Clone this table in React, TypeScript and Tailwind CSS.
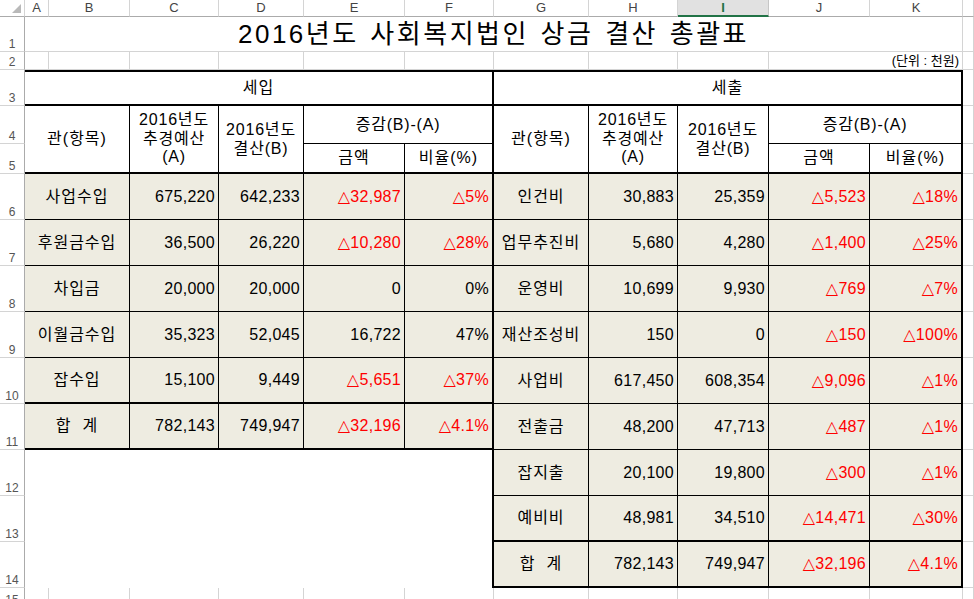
import clsx from "clsx";

// 2016 settlement summary sheet, drawn as an Excel-like grid
const FONT = "font-['Liberation_Sans','DejaVu_Sans','Noto_Sans_CJK_KR',sans-serif]";

const COLS = ["A", "B", "C", "D", "E", "F", "G", "H", "I", "J", "K", "L"];

const INCOME = [
  ["사업수입", "675,220", "642,233", "△32,987", "△5%"],
  ["후원금수입", "36,500", "26,220", "△10,280", "△28%"],
  ["차입금", "20,000", "20,000", "0", "0%"],
  ["이월금수입", "35,323", "52,045", "16,722", "47%"],
  ["잡수입", "15,100", "9,449", "△5,651", "△37%"],
  ["합  계", "782,143", "749,947", "△32,196", "△4.1%"],
];

const SPEND = [
  ["인건비", "30,883", "25,359", "△5,523", "△18%"],
  ["업무추진비", "5,680", "4,280", "△1,400", "△25%"],
  ["운영비", "10,699", "9,930", "△769", "△7%"],
  ["재산조성비", "150", "0", "△150", "△100%"],
  ["사업비", "617,450", "608,354", "△9,096", "△1%"],
  ["전출금", "48,200", "47,713", "△487", "△1%"],
  ["잡지출", "20,100", "19,800", "△300", "△1%"],
  ["예비비", "48,981", "34,510", "△14,471", "△30%"],
  ["합  계", "782,143", "749,947", "△32,196", "△4.1%"],
];

function RowHead({ n }: { n: number }) {
  return (
    <div className="flex items-end justify-center border-r border-b border-r-[#ababab] border-b-[#d4d4d4] bg-white pb-[1px] text-[12px] leading-none text-[#555]">
      {n}
    </div>
  );
}

function Grid({ className }: { className?: string }) {
  return <div className={clsx("border-r border-b border-[#d4d4d4]", className)} />;
}

function Value({ v, thick, last }: { v: string; thick?: boolean; last?: boolean }) {
  return (
    <div
      className={clsx(
        "flex items-center justify-end border-black bg-[#eeece1] pr-[3px] whitespace-pre tracking-[0.3px]",
        last ? "border-r-2" : "border-r",
        thick ? "border-b-2" : "border-b",
        v.startsWith("△") ? "text-[#ff0000]" : "text-black"
      )}
    >
      {v}
    </div>
  );
}

function Label({ v, thick, span }: { v: string; thick?: boolean; span?: boolean }) {
  return (
    <div
      className={clsx(
        "flex items-center justify-center border-r border-black bg-[#eeece1] whitespace-pre tracking-[1px]",
        thick ? "border-b-2" : "border-b",
        span && "col-span-2"
      )}
    >
      {v}
    </div>
  );
}

function HeadBlock({ side }: { side: "left" | "right" }) {
  const wide = side === "left";
  return (
    <>
      <div
        className={clsx(
          "row-span-2 flex items-center justify-center border-r border-b-2 border-black tracking-[1px]",
          wide && "col-span-2"
        )}
      >
        관(항목)
      </div>
      <div className="row-span-2 flex flex-col items-center justify-center border-r border-b-2 border-black text-center leading-[18.5px] tracking-[0.8px]">
        <span>2016년도</span>
        <span>추경예산</span>
        <span>(A)</span>
      </div>
      <div className="row-span-2 flex flex-col items-center justify-center border-r border-b-2 border-black text-center leading-[19px] tracking-[0.8px]">
        <span>2016년도</span>
        <span>결산(B)</span>
      </div>
      <div className="col-span-2 flex items-center justify-center border-r-2 border-b border-black tracking-[0.8px]">
        증감(B)-(A)
      </div>
    </>
  );
}

export default function App() {
  return (
    <div className={clsx("h-[599px] w-[974px] overflow-hidden bg-white text-[16px] text-black", FONT)}>
      <div className="grid grid-cols-[25px_24px_81px_89px_85px_101px_89px_95px_89px_91px_101px_93px_11px] grid-rows-[17px_35px_18px_36px_38px_30px_repeat(9,46px)_20px]">
        {/* ── Column headers ── */}
        <div className="relative border-r border-b border-r-[#d4d4d4] border-b-[#ababab] bg-white">
          <svg className="absolute right-[3px] bottom-[3px]" width="9" height="9" viewBox="0 0 9 9">
            <polygon points="9,0 9,9 0,9" fill="#b9b9b9" />
          </svg>
        </div>
        {COLS.map((c) =>
          c === "I" ? (
            <div
              key={c}
              className="flex items-center justify-center border-r border-b-2 border-r-[#c6c6c6] border-b-[#217346] bg-[#e1e1e1] text-[13px] font-bold text-[#217346]"
            >
              {c}
            </div>
          ) : (
            <div
              key={c}
              className="flex items-center justify-center border-r border-b border-r-[#d4d4d4] border-b-[#ababab] bg-white text-[13px] text-[#444]"
            >
              {c === "L" ? "" : c}
            </div>
          )
        )}

        {/* ── Row 1: title ── */}
        <RowHead n={1} />
        <div className="col-span-11 flex items-center justify-center border-r border-b border-[#d4d4d4] text-[26px] tracking-[2.5px] [word-spacing:2px]">
          2016년도 사회복지법인 상금 결산 총괄표
        </div>
        <Grid />

        {/* ── Row 2: unit ── */}
        <RowHead n={2} />
        {COLS.slice(0, 9).map((c) => (
          <Grid key={c} />
        ))}
        <div className="col-span-2 flex items-center justify-end border-r border-b border-[#d4d4d4] pr-[3px] text-[13px]">
          (단위 : 천원)
        </div>
        <Grid />

        {/* ── Row 3: section titles ── */}
        <RowHead n={3} />
        <div className="col-span-6 flex items-center justify-center border-t-2 border-r-2 border-b-2 border-black tracking-[1px]">
          세입
        </div>
        <div className="col-span-5 flex items-center justify-center border-t-2 border-r-2 border-b-2 border-black tracking-[1px]">
          세출
        </div>
        <Grid />

        {/* ── Rows 4-5: column titles ── */}
        <RowHead n={4} />
        <HeadBlock side="left" />
        <HeadBlock side="right" />
        <Grid />

        <RowHead n={5} />
        <div className="flex items-center justify-center border-r border-b-2 border-black tracking-[1px]">금액</div>
        <div className="flex items-center justify-center border-r-2 border-b-2 border-black tracking-[1px]">비율(%)</div>
        <div className="flex items-center justify-center border-r border-b-2 border-black tracking-[1px]">금액</div>
        <div className="flex items-center justify-center border-r-2 border-b-2 border-black tracking-[1px]">비율(%)</div>
        <Grid />

        {/* ── Rows 6-14: data ── */}
        {SPEND.map((r, i) => {
          const l = INCOME[i];
          const lThick = i >= 4;
          const rThick = i >= 7;
          return (
            <div key={r[0] + i} className="contents">
              <RowHead n={6 + i} />
              {l && (
                <>
                  <Label v={l[0]} thick={lThick} span />
                  <Value v={l[1]} thick={lThick} />
                  <Value v={l[2]} thick={lThick} />
                  <Value v={l[3]} thick={lThick} />
                  <Value v={l[4]} thick={lThick} last />
                </>
              )}
              {i === 6 && <div className="col-span-6 row-span-3 border-r-2 border-black bg-white" />}
              <Label v={r[0]} thick={rThick} />
              <Value v={r[1]} thick={rThick} />
              <Value v={r[2]} thick={rThick} />
              <Value v={r[3]} thick={rThick} />
              <Value v={r[4]} thick={rThick} last />
              <Grid />
            </div>
          );
        })}

        {/* ── Row 15 ── */}
        <RowHead n={15} />
        {COLS.map((c) => (
          <Grid key={c} className="border-b-0" />
        ))}
      </div>
    </div>
  );
}
